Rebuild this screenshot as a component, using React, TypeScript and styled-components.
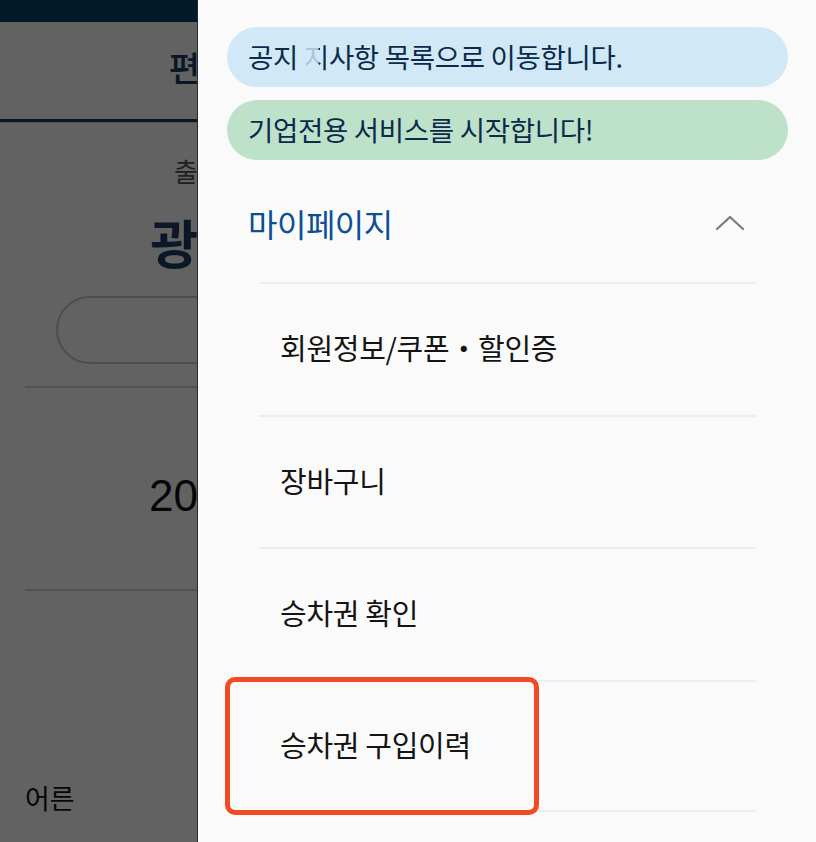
import React from 'react';
import styled, { createGlobalStyle } from 'styled-components';

const GlobalStyle = createGlobalStyle`
  html, body {
    margin: 0;
    padding: 0;
    width: 816px;
    height: 842px;
    overflow: hidden;
    background: #ffffff;
    font-family: "Noto Sans CJK KR", "Noto Sans", sans-serif;
  }
  * { box-sizing: border-box; }
`;

const Screen = styled.div`
  position: relative;
  width: 816px;
  height: 842px;
  overflow: hidden;
  background: #ffffff;
`;

/* ---------- page under the dim layer ---------- */

const StatusBar = styled.div`
  height: 22px;
  background: #00446e;
`;

const Tabs = styled.div`
  display: grid;
  grid-template-columns: 1fr 1fr;
  height: 101px;
  border-bottom: 1px solid #d9d9d9;
`;

const Tab = styled.div<{ $active?: boolean }>`
  display: flex;
  align-items: center;
  justify-content: center;
  padding: 0 8px 8px 0;
  font-size: 34px;
  font-weight: 500;
  color: ${(p) => (p.$active ? '#1f3d66' : '#888')};
  border-bottom: ${(p) => (p.$active ? '3px solid #1f3d66' : '3px solid transparent')};
`;

const Stations = styled.div`
  display: grid;
  grid-template-columns: 396px 1fr 396px;
  padding-top: 33px;
`;

const Station = styled.div`
  display: flex;
  flex-direction: column;
  align-items: center;
  gap: 26px;
`;

const StationLabel = styled.span`
  font-size: 26px;
  color: #555;
  line-height: 30px;
`;

const StationName = styled.span`
  font-size: 52px;
  font-weight: 700;
  color: #1f3d66;
  line-height: 60px;
`;

const OutlineButton = styled.div`
  margin: 24px 56px 0;
  height: 68px;
  border: 2px solid #c6c6c6;
  border-radius: 34px;
`;

const Rule = styled.div<{ $gap?: number }>`
  margin: ${(p) => p.$gap ?? 0}px 25px 0;
  height: 2px;
  background: #d6d6d6;
`;

const DateRow = styled.div`
  display: flex;
  align-items: center;
  height: 201px;
  padding: 6px 0 0 149px;
  font-size: 44px;
  color: #111;
  font-family: "Liberation Sans", "Noto Sans CJK KR", sans-serif;
`;

const Passenger = styled.div`
  padding: 188px 25px 0;
  font-size: 27px;
  line-height: 38px;
  color: #111;
`;

const Dim = styled.div`
  position: absolute;
  inset: 0;
  background: rgba(0, 0, 0, 0.615);
`;

/* ---------- side drawer ---------- */

const Drawer = styled.aside`
  position: absolute;
  top: 0;
  bottom: 0;
  left: 197px;
  right: 0;
  background: #fafafa;
  border-left: 1px solid #2a2a2a;
  padding: 27px 28px 0 29px;
`;

const Banners = styled.div`
  display: flex;
  flex-direction: column;
  gap: 13px;
`;

const Banner = styled.div<{ $tone: 'blue' | 'green' }>`
  display: flex;
  align-items: center;
  height: 60px;
  padding: 0 0 2px 21px;
  border-radius: 30px;
  background: ${(p) => (p.$tone === 'blue' ? '#d1e8f6' : '#bde2c9')};
  color: #0b2a4c;
  font-size: 27.5px;
  letter-spacing: -0.3px;
`;

const FadeChar = styled.span`
  background: linear-gradient(90deg, #aac6dc 0%, #aac6dc 55%, #0b2a4c 62%);
  -webkit-background-clip: text;
  background-clip: text;
  color: transparent;
`;

const SectionHeader = styled.div`
  display: flex;
  align-items: center;
  justify-content: space-between;
  height: 122px;
  padding: 4px 44px 0 21px;
`;

const SectionTitle = styled.span`
  font-size: 32px;
  color: #0c4f94;
  letter-spacing: -0.5px;
`;

const MenuList = styled.ul`
  list-style: none;
  margin: 0 32px;
  padding: 0;
`;

const MenuItem = styled.li`
  display: flex;
  align-items: center;
  height: 132.5px;
  padding: 0 0 4px 21px;
  border-top: 2px solid #ededed;
  font-size: 29px;
  color: #141414;
  letter-spacing: -0.3px;

  &:last-child {
    border-bottom: 2px solid #ededed;
  }
`;

const Highlight = styled.div`
  position: absolute;
  left: 27px;
  top: 677px;
  width: 314px;
  height: 138px;
  border: 5px solid #f24a24;
  border-radius: 10px;
  pointer-events: none;
`;

function ChevronUp() {
  return (
    <svg width="28" height="16" viewBox="0 0 28 16" fill="none">
      <polyline points="1,14 14,2 27,14" stroke="#7a7a7a" strokeWidth="2.2" strokeLinecap="round" strokeLinejoin="round" />
    </svg>
  );
}

const menu = ['회원정보/쿠폰・할인증', '장바구니', '승차권 확인', '승차권 구입이력'];

export default function App() {
  return (
    <Screen>
      <GlobalStyle />
      <StatusBar />
      <Tabs>
        <Tab $active>편도</Tab>
        <Tab>왕복</Tab>
      </Tabs>
      <Stations>
        <Station>
          <StationLabel>출발</StationLabel>
          <StationName>광명</StationName>
        </Station>
        <div />
        <Station>
          <StationLabel>도착</StationLabel>
          <StationName>부산</StationName>
        </Station>
      </Stations>
      <OutlineButton />
      <Rule $gap={22} />
      <DateRow>2024.05.21 (화)</DateRow>
      <Rule />
      <Passenger>어른</Passenger>

      <Dim />

      <Drawer>
        <Banners>
          <Banner $tone="blue">
            공지&nbsp;<FadeChar>지</FadeChar>사항 목록으로 이동합니다.
          </Banner>
          <Banner $tone="green">기업전용 서비스를 시작합니다!</Banner>
        </Banners>
        <SectionHeader>
          <SectionTitle>마이페이지</SectionTitle>
          <ChevronUp />
        </SectionHeader>
        <MenuList>
          {menu.map((m) => (
            <MenuItem key={m}>{m}</MenuItem>
          ))}
        </MenuList>
        <Highlight />
      </Drawer>
    </Screen>
  );
}
